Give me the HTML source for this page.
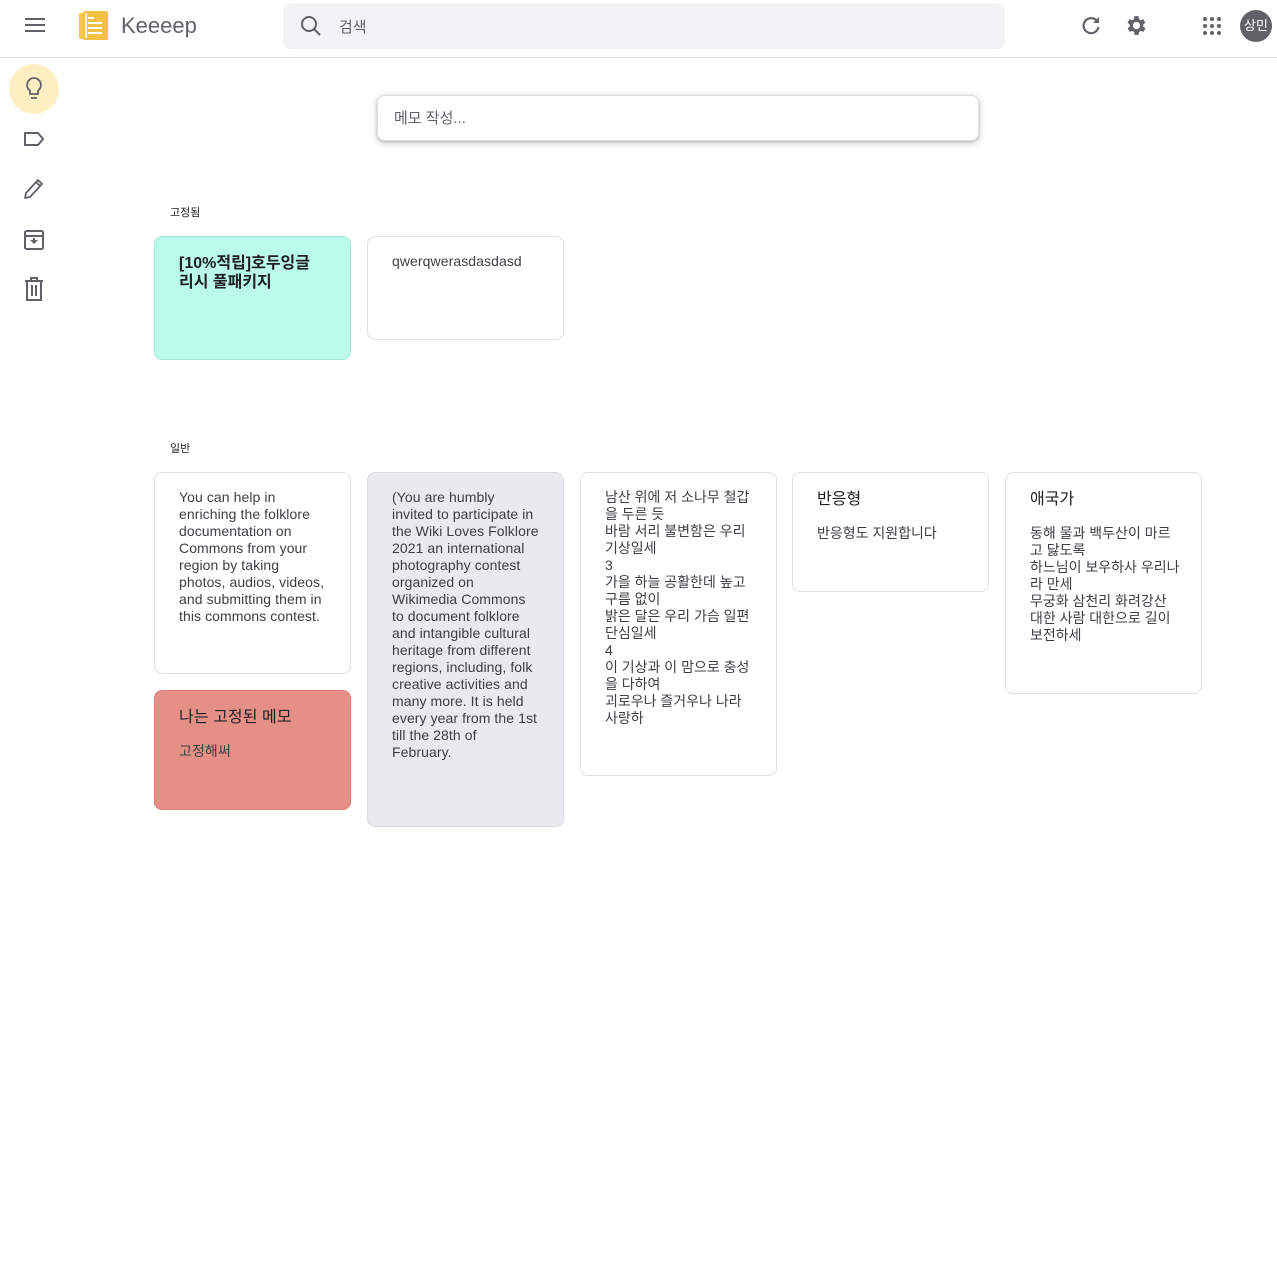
<!DOCTYPE html>
<html><head><meta charset="utf-8"><style>
*{box-sizing:border-box;margin:0;padding:0}
body{width:1277px;height:1266px;background:#fff;font-family:"Liberation Sans","Noto Sans CJK KR",sans-serif;color:#202124;position:relative;overflow:hidden}
.hdr{position:absolute;left:0;top:0;width:1277px;height:58px;border-bottom:1px solid #dadce0}
.abs{position:absolute}
.search{left:283px;top:3px;width:722px;height:46px;background:#f1f3f4;border-radius:8px}
.card{position:absolute;width:197px;border:1px solid #e0e0e0;border-radius:8px;padding:16px 22px 16px 24px;font-size:14px;line-height:17px;color:#3c4043;letter-spacing:.08px}
.card h3{font-size:16px;font-weight:normal;color:#202124;line-height:19px;margin:1px 0 16px}
.nw{white-space:nowrap}
.lbl{position:absolute;font-size:11px;color:#202124}
</style></head><body>
<div class="hdr"></div>
<svg class="abs" style="left:24px;top:17px" width="22" height="16"><path d="M1 2h20M1 8h20M1 14h20" stroke="#5f6368" stroke-width="2"/></svg>
<svg class="abs" style="left:78px;top:10px" width="32" height="32"><rect x="1" y="3" width="6" height="26" rx="2" fill="#f6bf26" opacity=".85"/><rect x="5" y="1" width="25" height="29" rx="2" fill="#f4c142"/><path d="M10 8h6M10 13h14M10 18h14M10 23h14" stroke="#fff" stroke-width="2"/><path d="M8 3v25" stroke="#fff" stroke-width="1.5"/></svg>
<div class="abs" style="left:121px;top:13px;font-size:22px;color:#5f6368">Keeeep</div>
<div class="abs search"></div>
<svg class="abs" style="left:300px;top:15px" width="22" height="22"><circle cx="9" cy="9" r="7" fill="none" stroke="#5f6368" stroke-width="2"/><path d="M14 14l6 6" stroke="#5f6368" stroke-width="2"/></svg>
<div class="abs" style="left:339px;top:16px;font-size:15px;color:#5f6368">검색</div>
<svg class="abs" style="left:1080px;top:14px" width="22" height="22"><path d="M17 7A7.5 7.5 0 1 0 18.5 13" fill="none" stroke="#5f6368" stroke-width="2.2"/><path d="M19 3v6h-6z" fill="#5f6368"/></svg>
<svg class="abs" style="left:1124px;top:13px" width="25" height="25" viewBox="0 0 24 24"><path fill="#5f6368" d="M19.4 13a7.8 7.8 0 0 0 0-2l2.1-1.6-2-3.5-2.5 1a7.5 7.5 0 0 0-1.7-1L15 3h-4l-.4 2.9a7.5 7.5 0 0 0-1.7 1l-2.5-1-2 3.5L6.6 11a7.8 7.8 0 0 0 0 2l-2.1 1.6 2 3.5 2.5-1a7.5 7.5 0 0 0 1.7 1L11 21h4l.4-2.9a7.5 7.5 0 0 0 1.7-1l2.5 1 2-3.5zM13 15.5a3.5 3.5 0 1 1 0-7 3.5 3.5 0 0 1 0 7z" transform="translate(-1 0)"/></svg>
<svg class="abs" style="left:1202px;top:16px" width="20" height="20"><g fill="#5f6368"><circle cx="3" cy="3" r="2"/><circle cx="10" cy="3" r="2"/><circle cx="17" cy="3" r="2"/><circle cx="3" cy="10" r="2"/><circle cx="10" cy="10" r="2"/><circle cx="17" cy="10" r="2"/><circle cx="3" cy="17" r="2"/><circle cx="10" cy="17" r="2"/><circle cx="17" cy="17" r="2"/></g></svg>
<div class="abs" style="left:1240px;top:10px;width:32px;height:32px;border-radius:50%;background:#5f6368;color:#fff;font-size:13px;line-height:32px;text-align:center">상민</div>
<div class="abs" style="left:9px;top:64px;width:50px;height:50px;border-radius:50%;background:#feefc3"></div>
<svg class="abs" style="left:22px;top:76px" width="24" height="26"><path d="M12 2a7 7 0 0 0-4 12.7V18h8v-3.3A7 7 0 0 0 12 2z" fill="none" stroke="#5f6368" stroke-width="1.8"/><path d="M9 22h6" stroke="#5f6368" stroke-width="1.8"/></svg>
<svg class="abs" style="left:22px;top:129px" width="24" height="20"><path d="M3 4h13l5 6-5 6H3z" fill="none" stroke="#5f6368" stroke-width="2" stroke-linejoin="round"/></svg>
<svg class="abs" style="left:22px;top:177px" width="24" height="24"><path d="M3 21l1-5L16 3l4 4L8 20zM14 5l4 4" fill="none" stroke="#5f6368" stroke-width="1.8" stroke-linejoin="round"/></svg>
<svg class="abs" style="left:22px;top:228px" width="24" height="24"><rect x="3" y="3" width="18" height="18" rx="1.5" fill="none" stroke="#5f6368" stroke-width="2"/><path d="M3 8h18" stroke="#5f6368" stroke-width="2"/><path d="M8 12h8l-4 4z" fill="#5f6368"/><path d="M12 10v3" stroke="#5f6368" stroke-width="2"/></svg>
<svg class="abs" style="left:22px;top:276px" width="24" height="26"><path d="M3 5h18M9 5V2h6v3M5 5v19h14V5M10 9v11M14 9v11" fill="none" stroke="#5f6368" stroke-width="2"/></svg>
<div class="abs" style="left:377px;top:95px;width:602px;height:46px;border-radius:8px;box-shadow:0 1px 2px rgba(60,64,67,.3),0 2px 6px 2px rgba(60,64,67,.15);border:1px solid #e0e0e0;padding:11px 16px;font-size:15px;color:#5f6368">메모 작성...</div>
<div class="lbl" style="left:170px;top:204px">고정됨</div>
<div class="lbl" style="left:170px;top:440px">일반</div>
<div class="card" style="left:154px;top:236px;height:124px;background:#bbfbe9;border-color:#a8e6d6;padding-right:34px"><h3 style="font-weight:bold;letter-spacing:0">[10%적립]호두잉글리시 풀패키지</h3></div>
<div class="card" style="left:367px;top:236px;height:104px">qwerqwerasdasdasd</div>
<div class="card nw" style="left:154px;top:472px;height:202px">You can help in<br>enriching the folklore<br>documentation on<br>Commons from your<br>region by taking<br>photos, audios, videos,<br>and submitting them in<br>this commons contest.</div>
<div class="card" style="left:154px;top:690px;height:120px;background:#e59086;border-color:#d88077"><h3>나는 고정된 메모</h3>고정해써</div>
<div class="card nw" style="left:367px;top:472px;height:355px;background:#e8eaed;border-color:#dadce0">(You are humbly<br>invited to participate in<br>the Wiki Loves Folklore<br>2021 an international<br>photography contest<br>organized on<br>Wikimedia Commons<br>to document folklore<br>and intangible cultural<br>heritage from different<br>regions, including, folk<br>creative activities and<br>many more. It is held<br>every year from the 1st<br>till the 28th of<br>February.</div>
<div class="card nw" style="left:580px;top:472px;height:304px;letter-spacing:0">남산 위에 저 소나무 철갑<br>을 두른 듯<br>바람 서리 불변함은 우리<br>기상일세<br>3<br>가을 하늘 공활한데 높고<br>구름 없이<br>밝은 달은 우리 가슴 일편<br>단심일세<br>4<br>이 기상과 이 맘으로 충성<br>을 다하여<br>괴로우나 즐거우나 나라<br>사랑하</div>
<div class="card" style="left:792px;top:472px;height:120px;letter-spacing:0"><h3>반응형</h3>반응형도 지원합니다</div>
<div class="card nw" style="left:1005px;top:472px;height:222px;letter-spacing:0"><h3>애국가</h3>동해 물과 백두산이 마르<br>고 닳도록<br>하느님이 보우하사 우리나<br>라 만세<br>무궁화 삼천리 화려강산<br>대한 사람 대한으로 길이<br>보전하세</div>
</body></html>
